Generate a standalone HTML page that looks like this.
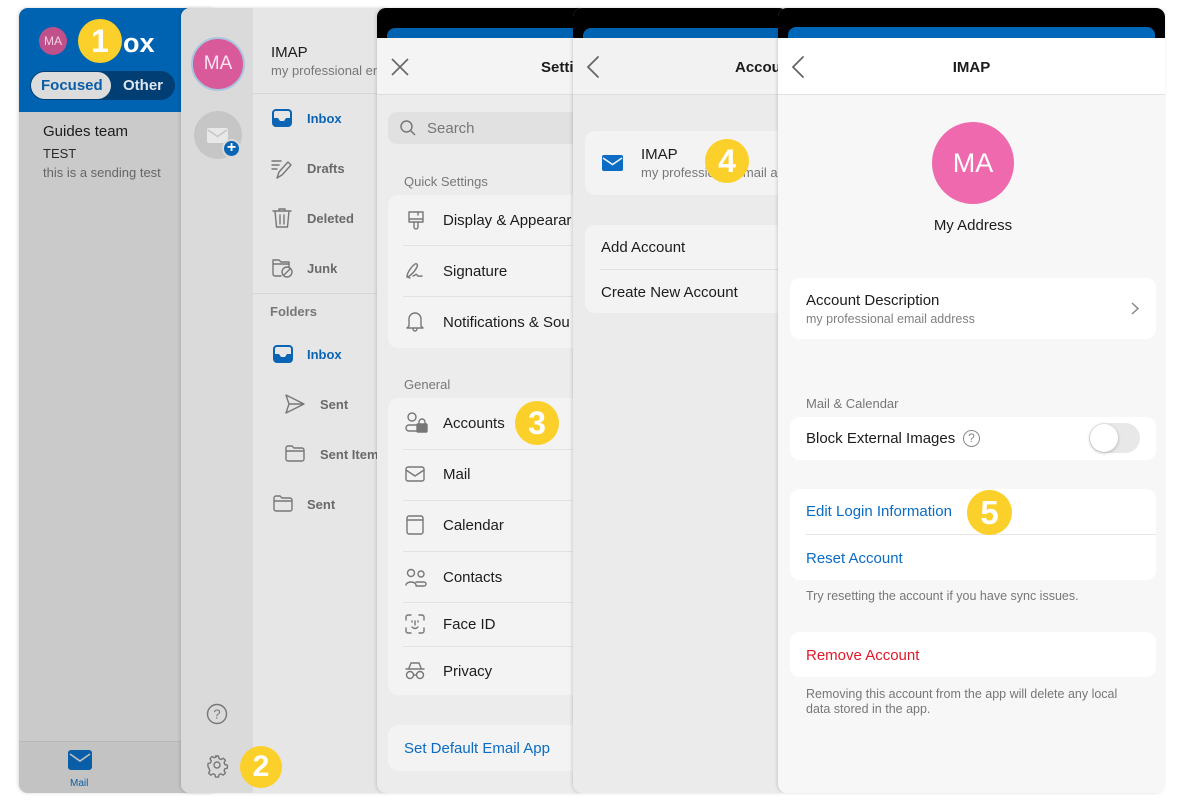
<!DOCTYPE html>
<html><head><meta charset="utf-8">
<style>
*{box-sizing:border-box;margin:0;padding:0}
body{width:1200px;height:800px;background:#fff;position:relative;overflow:hidden;font-family:"Liberation Sans",sans-serif;color:#1c1c1c}
.a{position:absolute}
.p{position:absolute;top:8px;height:785px;border-radius:9px;overflow:hidden;box-shadow:-1px 0 3px rgba(0,0,0,.15)}
.t{position:absolute;white-space:nowrap}
.badge{position:absolute;border-radius:50%;background:#fcd02a;color:#fff;font-weight:bold;text-align:center}
svg{position:absolute;overflow:visible}
.ic{fill:none;stroke:#777;stroke-width:1.4;stroke-linecap:round;stroke-linejoin:round}
</style></head><body>

<!-- Panel 1 -->
<div class="p" style="left:19px;width:200px;background:#cacaca">
  <div class="a" style="left:0;top:0;width:200px;height:104px;background:#0063b1"></div>
  <div class="a" style="left:20px;top:19px;width:28px;height:28px;border-radius:50%;background:#c0508a;color:#f3d2e4;font-size:12px;text-align:center;line-height:28px">MA</div>
  <div class="t" style="left:104px;top:20px;font-size:27px;font-weight:bold;color:#fff">ox</div>
  <div class="a" style="left:11px;top:63px;width:145px;height:29px;border-radius:15px;background:#003e73"></div>
  <div class="a" style="left:12px;top:64px;width:80px;height:27px;border-radius:14px;background:#dcdcdc"></div>
  <div class="t" style="left:22px;top:69px;font-size:15px;font-weight:bold;color:#0a5ea8">Focused</div>
  <div class="t" style="left:104px;top:69px;font-size:15px;font-weight:bold;color:#dfe6ee">Other</div>
  <div class="t" style="left:24px;top:115px;font-size:15px;color:#1b1b1b">Guides team</div>
  <div class="t" style="left:24px;top:138px;font-size:13px;color:#2a2a2a">TEST</div>
  <div class="t" style="left:24px;top:157px;font-size:13px;color:#666">this is a sending test</div>
  <div class="a" style="left:0;top:733px;width:200px;height:52px;background:#c3c3c3;border-top:1px solid #b8b8b8"></div>
  <svg style="left:49px;top:742px" width="24" height="20"><rect x="0" y="0" width="24" height="20" rx="3" fill="#0a5ea8"/><path d="M2 4 L12 11 L22 4" stroke="#c3c3c3" stroke-width="1.6" fill="none"/></svg>
  <div class="t" style="left:51px;top:770px;font-size:10px;color:#0a5ea8">Mail</div>
</div>
<div class="badge" style="left:78px;top:19px;width:44px;height:44px;font-size:32px;line-height:44px">1</div>

<!-- Panel 2 -->
<div class="p" style="left:181px;width:210px;background:#e6e6e6">
  <div class="a" style="left:0;top:0;width:72px;height:785px;background:#dadada"></div>
  <div class="a" style="left:10px;top:29px;width:54px;height:54px;border-radius:50%;background:#d85a9b;border:2px solid #a9c6df;color:#fbe4ef;font-size:19px;text-align:center;line-height:50px">MA</div>
  <div class="a" style="left:13px;top:103px;width:48px;height:48px;border-radius:50%;background:#c6c6c6"></div>
  <svg style="left:26px;top:120px" width="21" height="15"><rect width="21" height="15" rx="2" fill="#e8e8e8"/><path d="M1 2 L10.5 8.5 L20 2" stroke="#c6c6c6" stroke-width="1.5" fill="none"/></svg>
  <div class="a" style="left:41px;top:131px;width:19px;height:19px;border-radius:50%;background:#0a64b4;border:2px solid #dadada;color:#fff;font-size:16px;font-weight:bold;text-align:center;line-height:14px">+</div>
  <svg style="left:26px;top:696px" width="20" height="20" class="ic"><circle cx="10" cy="10" r="9.5"/><text x="10" y="14.5" font-size="13" text-anchor="middle" fill="#777" stroke="none" font-family="Liberation Sans">?</text></svg>
  <svg style="left:26px;top:747px" width="20" height="20" class="ic"><circle cx="10" cy="10" r="3"/><path d="M8.5 1h3l.5 2.5 2 1 2.3-1.3 2.1 2.1-1.3 2.3.8 2 2.5.6v3l-2.5.5-.8 2 1.3 2.3-2.1 2.1-2.3-1.3-2 .8-.5 2.5h-3l-.5-2.5-2-.8-2.3 1.3-2.1-2.1 1.3-2.3-.8-2L1 11.5v-3l2.5-.6.8-2-1.3-2.3 2.1-2.1 2.3 1.3 2-1z"/></svg>
  <div class="t" style="left:90px;top:36px;font-size:15px;color:#1c1c1c">IMAP</div>
  <div class="t" style="left:90px;top:55px;font-size:13px;color:#777">my professional em</div>
  <div class="a" style="left:72px;top:85px;width:140px;height:1px;background:#d6d6d6"></div>
  <svg style="left:91px;top:101px" width="20" height="18"><rect x="1" y="1" width="18" height="16" rx="3" fill="none" stroke="#0a64b4" stroke-width="2"/><path d="M1 9 h5 l2 3 h4 l2-3 h5 v5 a3 3 0 0 1-3 3 h-12 a3 3 0 0 1-3-3z" fill="#0a64b4"/></svg>
  <div class="t" style="left:126px;top:103px;font-size:13px;font-weight:bold;color:#0a64b4">Inbox</div>
  <svg style="left:90px;top:150px" width="22" height="22" class="ic"><path d="M1 3h9M1 7h7M1 11h5M6 20l2-6 9-10 3 3-9 10z"/></svg>
  <div class="t" style="left:126px;top:153px;font-size:13px;font-weight:bold;color:#6a6a6a">Drafts</div>
  <svg style="left:91px;top:199px" width="20" height="22" class="ic"><path d="M1 4h18M7 4V2h6v2M3 4l1.5 16h11L17 4M8 8v9M12 8v9"/></svg>
  <div class="t" style="left:126px;top:203px;font-size:13px;font-weight:bold;color:#6a6a6a">Deleted</div>
  <svg style="left:91px;top:250px" width="22" height="20" class="ic"><path d="M9 18H3a2 2 0 0 1-2-2V2h6l2 2h8v5"/><path d="M1 6h16"/><circle cx="15" cy="14" r="5"/><path d="M12 17l6-6"/></svg>
  <div class="t" style="left:126px;top:253px;font-size:13px;font-weight:bold;color:#6a6a6a">Junk</div>
  <div class="a" style="left:72px;top:285px;width:140px;height:1px;background:#d6d6d6"></div>
  <div class="t" style="left:89px;top:296px;font-size:13px;font-weight:bold;color:#777">Folders</div>
  <svg style="left:92px;top:337px" width="20" height="18"><rect x="1" y="1" width="18" height="16" rx="3" fill="none" stroke="#0a64b4" stroke-width="2"/><path d="M1 9 h5 l2 3 h4 l2-3 h5 v5 a3 3 0 0 1-3 3 h-12 a3 3 0 0 1-3-3z" fill="#0a64b4"/></svg>
  <div class="t" style="left:126px;top:339px;font-size:13px;font-weight:bold;color:#0a64b4">Inbox</div>
  <svg style="left:104px;top:386px" width="20" height="20" class="ic"><path d="M1 1l18 9-18 9 3-9zM4 10h15"/></svg>
  <div class="t" style="left:139px;top:389px;font-size:13px;font-weight:bold;color:#6a6a6a">Sent</div>
  <svg style="left:104px;top:437px" width="20" height="17" class="ic"><path d="M1 3a2 2 0 0 1 2-2h4l2 2h8a2 2 0 0 1 2 2v9a2 2 0 0 1-2 2H3a2 2 0 0 1-2-2zM1 6h18"/></svg>
  <div class="t" style="left:139px;top:439px;font-size:13px;font-weight:bold;color:#6a6a6a">Sent Item</div>
  <svg style="left:92px;top:487px" width="20" height="17" class="ic"><path d="M1 3a2 2 0 0 1 2-2h4l2 2h8a2 2 0 0 1 2 2v9a2 2 0 0 1-2 2H3a2 2 0 0 1-2-2zM1 6h18"/></svg>
  <div class="t" style="left:126px;top:489px;font-size:13px;font-weight:bold;color:#6a6a6a">Sent</div>
</div>
<div class="badge" style="left:240px;top:746px;width:42px;height:42px;font-size:30px;line-height:42px">2</div>

<!-- Panel 3 -->
<div class="p" style="left:377px;width:210px;background:#ececec">
  <div class="a" style="left:0;top:0;width:210px;height:30px;background:#000"></div>
  <div class="a" style="left:10px;top:20px;width:200px;height:20px;border-radius:8px;background:#0063b1"></div>
  <div class="a" style="left:0;top:30px;width:210px;height:57px;background:#f4f4f4;border-bottom:1px solid #dedede"></div>
  <svg style="left:15px;top:51px" width="16" height="16" fill="none" stroke="#666" stroke-width="1.6"><path d="M0 0L16 16M16 0L0 16"/></svg>
  <div class="t" style="left:164px;top:51px;font-size:15px;font-weight:bold;color:#1c1c1c">Setti</div>
  <div class="a" style="left:11px;top:104px;width:200px;height:32px;border-radius:9px;background:#e1e1e1"></div>
  <svg style="left:23px;top:112px" width="16" height="16" fill="none" stroke="#777" stroke-width="1.5"><circle cx="6.5" cy="6.5" r="5.5"/><path d="M10.5 10.5L15 15"/></svg>
  <div class="t" style="left:50px;top:112px;font-size:15px;color:#777">Search</div>
  <div class="t" style="left:27px;top:166px;font-size:13px;color:#777">Quick Settings</div>
  <div class="a" style="left:11px;top:187px;width:200px;height:153px;border-radius:10px;background:#f3f3f3"></div>
  <div class="a" style="left:26px;top:237px;width:190px;height:1px;background:#e2e2e2"></div>
  <div class="a" style="left:26px;top:288px;width:190px;height:1px;background:#e2e2e2"></div>
  <svg style="left:31px;top:203px" width="16" height="20" class="ic"><path d="M1 1h14v10H1zM1 8h14M10 1v3M6 11v5a2 2 0 0 0 4 0v-5"/></svg>
  <div class="t" style="left:66px;top:204px;font-size:15px">Display &amp; Appearar</div>
  <svg style="left:28px;top:253px" width="20" height="20" class="ic"><path d="M2 16c0-4 4-10 8-13 2-1 3 1 2 3-2 4-6 8-9 10M2 16l3 1M8 15c2 0 3-3 4-1s3 1 5 1"/></svg>
  <div class="t" style="left:66px;top:255px;font-size:15px">Signature</div>
  <svg style="left:29px;top:303px" width="18" height="21" class="ic"><path d="M3 15V8a6 6 0 0 1 12 0v7l2 2H1zM7 18a2 2 0 0 0 4 0"/></svg>
  <div class="t" style="left:66px;top:306px;font-size:15px">Notifications &amp; Sou</div>
  <div class="t" style="left:27px;top:369px;font-size:13px;color:#777">General</div>
  <div class="a" style="left:11px;top:390px;width:200px;height:297px;border-radius:10px;background:#f3f3f3"></div>
  <div class="a" style="left:26px;top:441px;width:190px;height:1px;background:#e2e2e2"></div>
  <div class="a" style="left:26px;top:492px;width:190px;height:1px;background:#e2e2e2"></div>
  <div class="a" style="left:26px;top:543px;width:190px;height:1px;background:#e2e2e2"></div>
  <div class="a" style="left:26px;top:594px;width:190px;height:1px;background:#e2e2e2"></div>
  <div class="a" style="left:26px;top:638px;width:190px;height:1px;background:#e2e2e2"></div>
  <svg style="left:28px;top:404px" width="24" height="22" class="ic"><circle cx="7" cy="5" r="4"/><path d="M12 19H4a3 3 0 0 1 0-6h8"/><rect x="12" y="12" width="10" height="8" rx="1" fill="#777"/><path d="M14 12v-2a3 3 0 0 1 6 0v2"/></svg>
  <div class="t" style="left:66px;top:407px;font-size:15px">Accounts</div>
  <svg style="left:28px;top:458px" width="20" height="16" class="ic"><rect x="1" y="1" width="18" height="14" rx="2"/><path d="M1 4l9 6 9-6"/></svg>
  <div class="t" style="left:66px;top:458px;font-size:15px">Mail</div>
  <svg style="left:29px;top:507px" width="18" height="20" class="ic"><rect x="1" y="1" width="16" height="18" rx="2"/><path d="M1 5h16"/></svg>
  <div class="t" style="left:66px;top:509px;font-size:15px">Calendar</div>
  <svg style="left:28px;top:560px" width="22" height="20" class="ic"><circle cx="6" cy="5" r="3.5"/><circle cx="16" cy="6" r="3"/><path d="M1 17a5 3 0 0 1 10 0M11 14h8a2 2 0 0 1 0 4h-8"/></svg>
  <div class="t" style="left:66px;top:561px;font-size:15px">Contacts</div>
  <svg style="left:28px;top:606px" width="20" height="20" class="ic"><path d="M1 6V3a2 2 0 0 1 2-2h3M14 1h3a2 2 0 0 1 2 2v3M19 14v3a2 2 0 0 1-2 2h-3M6 19H3a2 2 0 0 1-2-2v-3M7 7v1M13 7v1M10 7v4M7 13c2 2 4 2 6 0"/></svg>
  <div class="t" style="left:66px;top:608px;font-size:15px">Face ID</div>
  <svg style="left:28px;top:654px" width="20" height="18" class="ic"><path d="M4 6l2-5h8l2 5M1 7h18"/><circle cx="5" cy="13" r="3.5"/><circle cx="15" cy="13" r="3.5"/><path d="M8.5 13h3"/></svg>
  <div class="t" style="left:66px;top:655px;font-size:15px">Privacy</div>
  <div class="a" style="left:11px;top:717px;width:200px;height:46px;border-radius:10px;background:#f3f3f3"></div>
  <div class="t" style="left:27px;top:732px;font-size:15px;color:#0a6cc4">Set Default Email App</div>
</div>
<div class="badge" style="left:515px;top:401px;width:44px;height:44px;font-size:32px;line-height:44px">3</div>

<!-- Panel 4 -->
<div class="p" style="left:573px;width:215px;background:#ebebeb">
  <div class="a" style="left:0;top:0;width:215px;height:30px;background:#000"></div>
  <div class="a" style="left:10px;top:20px;width:205px;height:20px;border-radius:8px;background:#0063b1"></div>
  <div class="a" style="left:0;top:30px;width:215px;height:57px;background:#f2f2f2;border-bottom:1px solid #dedede"></div>
  <svg style="left:14px;top:48px" width="12" height="22" fill="none" stroke="#666" stroke-width="1.8" stroke-linecap="round"><path d="M11 1L1 11l10 10"/></svg>
  <div class="t" style="left:162px;top:51px;font-size:15px;font-weight:bold">Accou</div>
  <div class="a" style="left:12px;top:123px;width:210px;height:64px;border-radius:10px;background:#f3f3f3"></div>
  <svg style="left:29px;top:147px" width="21" height="16"><rect width="21" height="16" rx="2" fill="#0a6cc4"/><path d="M1 3l9.5 6.5L20 3" stroke="#f3f3f3" stroke-width="1.6" fill="none"/></svg>
  <div class="t" style="left:68px;top:138px;font-size:15px">IMAP</div>
  <div class="t" style="left:68px;top:157px;font-size:13px;color:#777">my professional email ac</div>
  <div class="a" style="left:12px;top:217px;width:210px;height:88px;border-radius:10px;background:#f3f3f3"></div>
  <div class="a" style="left:27px;top:261px;width:195px;height:1px;background:#e0e0e0"></div>
  <div class="t" style="left:28px;top:231px;font-size:15px">Add Account</div>
  <div class="t" style="left:28px;top:276px;font-size:15px">Create New Account</div>
</div>
<div class="badge" style="left:705px;top:139px;width:44px;height:44px;font-size:32px;line-height:44px">4</div>

<!-- Panel 5 -->
<div class="p" style="left:778px;width:387px;background:#f7f7f7">
  <div class="a" style="left:0;top:0;width:387px;height:30px;background:#000"></div>
  <div class="a" style="left:10px;top:19px;width:367px;height:22px;border-radius:8px;background:#0068b8"></div>
  <div class="a" style="left:0;top:30px;width:387px;height:57px;background:#fff;border-bottom:1px solid #e2e2e2"></div>
  <svg style="left:14px;top:48px" width="12" height="22" fill="none" stroke="#666" stroke-width="1.8" stroke-linecap="round"><path d="M11 1L1 11l10 10"/></svg>
  <div class="t" style="left:0;width:387px;text-align:center;top:51px;font-size:15px;font-weight:bold">IMAP</div>
  <div class="a" style="left:154px;top:114px;width:82px;height:82px;border-radius:50%;background:#ef69ae;color:#fff;font-size:27px;text-align:center;line-height:82px">MA</div>
  <div class="t" style="left:0;width:390px;text-align:center;top:209px;font-size:15px">My Address</div>
  <div class="a" style="left:12px;top:270px;width:366px;height:61px;border-radius:10px;background:#fff"></div>
  <div class="t" style="left:28px;top:284px;font-size:15px">Account Description</div>
  <div class="t" style="left:28px;top:304px;font-size:12.5px;color:#808080">my professional email address</div>
  <svg style="left:353px;top:294px" width="8" height="13" fill="none" stroke="#888" stroke-width="1.5"><path d="M1 1l6 5.5L1 12"/></svg>
  <div class="t" style="left:28px;top:388px;font-size:13px;color:#777">Mail &amp; Calendar</div>
  <div class="a" style="left:12px;top:409px;width:366px;height:43px;border-radius:10px;background:#fff"></div>
  <div class="t" style="left:28px;top:422px;font-size:15px">Block External Images</div>
  <div class="a" style="left:185px;top:422px;width:17px;height:17px;border-radius:50%;border:1px solid #888;color:#888;font-size:12px;text-align:center;line-height:15px">?</div>
  <div class="a" style="left:311px;top:415px;width:51px;height:30px;border-radius:15px;background:#e8e8e8"></div>
  <div class="a" style="left:312px;top:416px;width:28px;height:28px;border-radius:50%;background:#fff;box-shadow:0 1px 3px rgba(0,0,0,.25)"></div>
  <div class="a" style="left:12px;top:481px;width:366px;height:91px;border-radius:10px;background:#fff"></div>
  <div class="a" style="left:28px;top:526px;width:350px;height:1px;background:#e6e6e6"></div>
  <div class="t" style="left:28px;top:495px;font-size:15px;color:#0a6cc4">Edit Login Information</div>
  <div class="t" style="left:28px;top:542px;font-size:15px;color:#0a6cc4">Reset Account</div>
  <div class="t" style="left:28px;top:581px;font-size:12.5px;color:#777">Try resetting the account if you have sync issues.</div>
  <div class="a" style="left:12px;top:624px;width:366px;height:45px;border-radius:10px;background:#fff"></div>
  <div class="t" style="left:28px;top:639px;font-size:15px;color:#e0192a">Remove Account</div>
  <div class="t" style="left:28px;top:679px;font-size:12.5px;color:#777;line-height:15px;white-space:normal;width:335px">Removing this account from the app will delete any local data stored in the app.</div>
</div>
<div class="badge" style="left:967px;top:490px;width:45px;height:45px;font-size:33px;line-height:45px">5</div>

</body></html>
